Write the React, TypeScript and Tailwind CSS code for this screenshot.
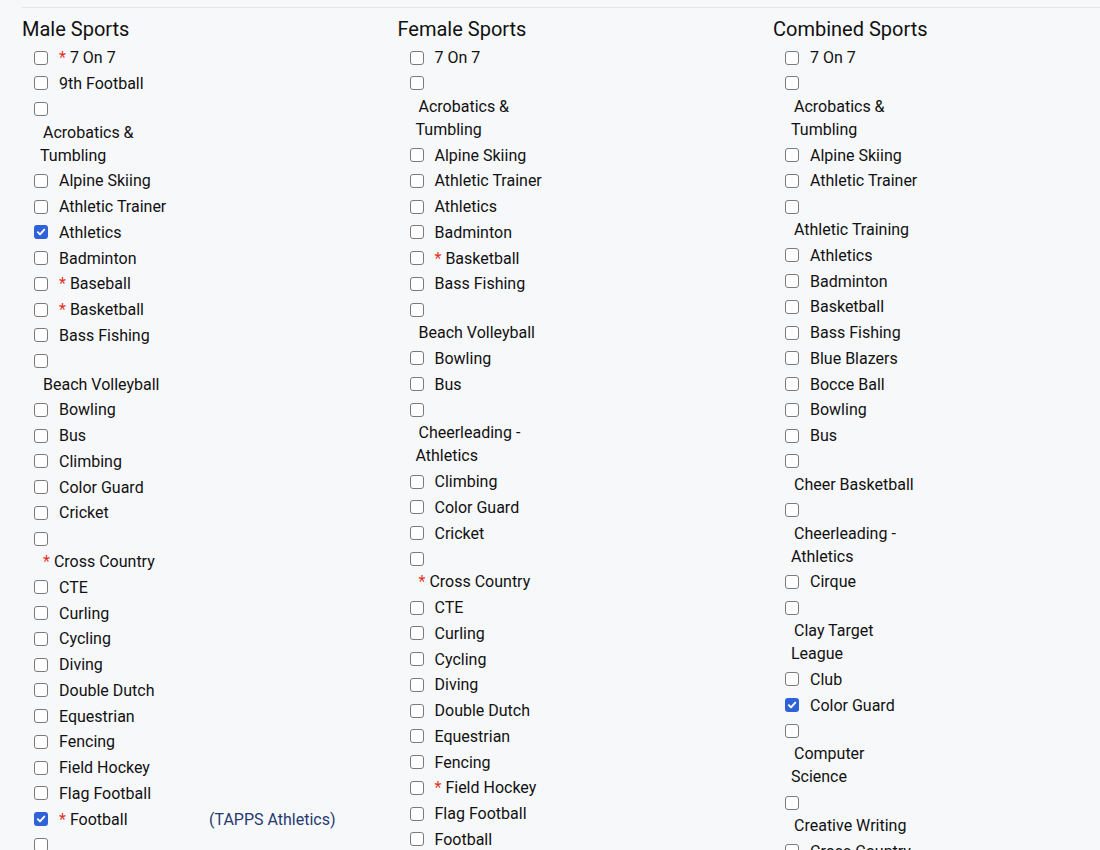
import React from "react";

type Item = {
  label?: string;
  lines?: string[];
  req?: boolean;
  checked?: boolean;
  extra?: string;
};

const male: Item[] = [
  { label: "7 On 7", req: true },
  { label: "9th Football" },
  { lines: ["Acrobatics &", "Tumbling"] },
  { label: "Alpine Skiing" },
  { label: "Athletic Trainer" },
  { label: "Athletics", checked: true },
  { label: "Badminton" },
  { label: "Baseball", req: true },
  { label: "Basketball", req: true },
  { label: "Bass Fishing" },
  { lines: ["Beach Volleyball"] },
  { label: "Bowling" },
  { label: "Bus" },
  { label: "Climbing" },
  { label: "Color Guard" },
  { label: "Cricket" },
  { lines: ["Cross Country"], req: true },
  { label: "CTE" },
  { label: "Curling" },
  { label: "Cycling" },
  { label: "Diving" },
  { label: "Double Dutch" },
  { label: "Equestrian" },
  { label: "Fencing" },
  { label: "Field Hockey" },
  { label: "Flag Football" },
  { label: "Football", req: true, checked: true, extra: "(TAPPS Athletics)" },
  { lines: ["Freshman", "Football"] },
];

const female: Item[] = [
  { label: "7 On 7" },
  { lines: ["Acrobatics &", "Tumbling"] },
  { label: "Alpine Skiing" },
  { label: "Athletic Trainer" },
  { label: "Athletics" },
  { label: "Badminton" },
  { label: "Basketball", req: true },
  { label: "Bass Fishing" },
  { lines: ["Beach Volleyball"] },
  { label: "Bowling" },
  { label: "Bus" },
  { lines: ["Cheerleading -", "Athletics"] },
  { label: "Climbing" },
  { label: "Color Guard" },
  { label: "Cricket" },
  { lines: ["Cross Country"], req: true },
  { label: "CTE" },
  { label: "Curling" },
  { label: "Cycling" },
  { label: "Diving" },
  { label: "Double Dutch" },
  { label: "Equestrian" },
  { label: "Fencing" },
  { label: "Field Hockey", req: true },
  { label: "Flag Football" },
  { label: "Football" },
  { label: "Golf" },
];

const combined: Item[] = [
  { label: "7 On 7" },
  { lines: ["Acrobatics &", "Tumbling"] },
  { label: "Alpine Skiing" },
  { label: "Athletic Trainer" },
  { lines: ["Athletic Training"] },
  { label: "Athletics" },
  { label: "Badminton" },
  { label: "Basketball" },
  { label: "Bass Fishing" },
  { label: "Blue Blazers" },
  { label: "Bocce Ball" },
  { label: "Bowling" },
  { label: "Bus" },
  { lines: ["Cheer Basketball"] },
  { lines: ["Cheerleading -", "Athletics"] },
  { label: "Cirque" },
  { lines: ["Clay Target", "League"] },
  { label: "Club" },
  { label: "Color Guard", checked: true },
  { lines: ["Computer", "Science"] },
  { lines: ["Creative Writing"] },
  { label: "Cross Country" },
  { label: "CTE" },
];

function Box({ checked }: { checked?: boolean }) {
  if (checked) {
    return (
      <span className="inline-flex h-[14px] w-[14px] shrink-0 items-center justify-center rounded-[3px] bg-[#2f62d8]">
        <svg width="10" height="10" viewBox="0 0 10 10" fill="none">
          <path d="M1.8 5.2 L4 7.4 L8.3 2.6" stroke="white" strokeWidth="1.9" strokeLinecap="round" strokeLinejoin="round" />
        </svg>
      </span>
    );
  }
  return (
    <span className="inline-block h-[14px] w-[14px] shrink-0 rounded-[3px] border border-[#7a7a7a] bg-white" />
  );
}

function Star() {
  return <span className="mr-[4px] text-[#e5321f]">*</span>;
}

function Row({ item }: { item: Item }) {
  if (item.lines) {
    return (
      <div className="mb-[2.75px]">
        <div className="flex h-[23px] items-center">
          <Box checked={item.checked} />
        </div>
        <div className="pl-[6px] indent-[3px] leading-[23px]">
          {item.req && <Star />}
          {item.lines.map((l, i) => (
            <React.Fragment key={i}>
              {i > 0 && <br />}
              {l}
            </React.Fragment>
          ))}
        </div>
      </div>
    );
  }
  return (
    <div className="mb-[2.75px] flex h-[23px] items-center leading-[23px]">
      <Box checked={item.checked} />
      <span className={item.extra ? "ml-[11px] w-[150px] shrink-0" : "ml-[11px] whitespace-nowrap"}>
        {item.req && <Star />}
        {item.label}
      </span>
      {item.extra && <span className="whitespace-nowrap text-[#253a70]">{item.extra}</span>}
    </div>
  );
}

function Column({ title, items, className }: { title: string; items: Item[]; className: string }) {
  return (
    <div className={className}>
      <h2 className="text-[20px] leading-[28px] font-normal text-[#111111]">{title}</h2>
      <div className="mt-[3px] pl-[12px] text-[16px] text-[#111111]">
        {items.map((it, i) => (
          <Row key={i} item={it} />
        ))}
      </div>
    </div>
  );
}

export default function App() {
  return (
    <div
      className="h-[850px] w-full overflow-hidden bg-[#f7f8fa]"
      style={{ fontFamily: 'Roboto, "Liberation Sans", Arial, sans-serif' }}
    >
      <div className="ml-[22px] mt-[7px] flex border-t border-[#e4e6e9] pt-[7px]">
        <Column title="Male Sports" items={male} className="w-[375.5px] shrink-0" />
        <Column title="Female Sports" items={female} className="w-[375.5px] shrink-0" />
        <Column title="Combined Sports" items={combined} className="min-w-0 flex-1" />
      </div>
    </div>
  );
}
